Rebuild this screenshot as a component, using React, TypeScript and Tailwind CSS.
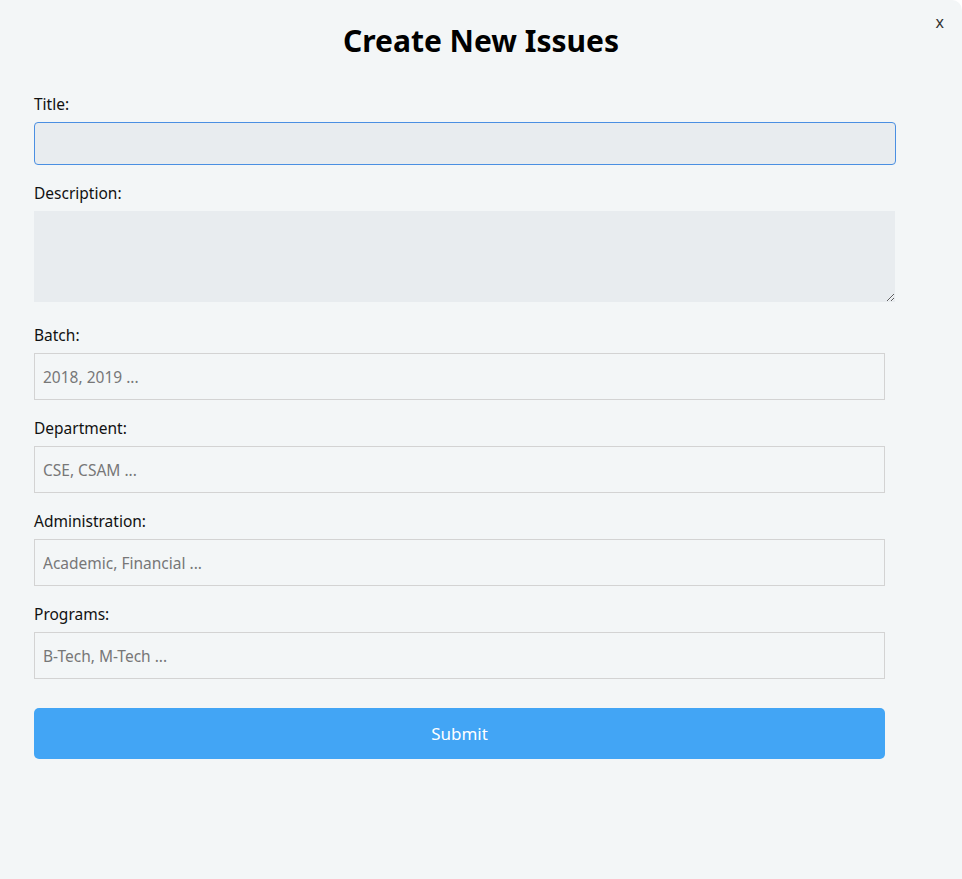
import { useState } from 'react';

const fields = [
  { label: 'Batch:', placeholder: '2018, 2019 ...' },
  { label: 'Department:', placeholder: 'CSE, CSAM ...' },
  { label: 'Administration:', placeholder: 'Academic, Financial ...' },
  { label: 'Programs:', placeholder: 'B-Tech, M-Tech ...' },
];

export default function App() {
  const [title, setTitle] = useState('');
  const [description, setDescription] = useState('');

  return (
    <div className="min-h-screen bg-white font-['Noto_Sans','Open_Sans',sans-serif]">
      <div className="relative min-h-[879px] bg-[#f3f6f7] rounded-tr-[10px] pt-[20px]">
        <button className="absolute right-[18px] top-[10px] text-[16px] text-[#333]">x</button>

        <h1 className="text-center text-[30px] font-bold leading-[42px] text-black">
          Create New Issues
        </h1>

        <form className="mt-[30px] pl-[34px]" onSubmit={(e) => e.preventDefault()}>
          <label className="block text-[15.5px] leading-[24px] text-[#111] mb-[6px]">Title:</label>
          <input
            type="text"
            autoFocus
            value={title}
            onChange={(e) => setTitle(e.target.value)}
            className="block w-[862px] h-[43px] rounded-[4px] border border-[#4a8fe2] bg-[#e8ecef] px-[9px] caret-[#6b7a8a] outline-none mb-[16px]"
          />

          <label className="block text-[15.5px] leading-[24px] text-[#111] mb-[6px]">Description:</label>
          <textarea
            value={description}
            onChange={(e) => setDescription(e.target.value)}
            className="block w-[861px] h-[91px] bg-[#e8ecef] px-[9px] py-[6px] outline-none mb-[21px] resize-y"
          />

          {fields.map((f) => (
            <div key={f.label}>
              <label className="block text-[15.5px] leading-[24px] text-[#111] mb-[6px]">{f.label}</label>
              <input
                type="text"
                placeholder={f.placeholder}
                className="block w-[851px] h-[47px] border border-[#d3d3d3] bg-transparent px-[8px] text-[15.5px] placeholder:text-[#777] outline-none mb-[16px]"
              />
            </div>
          ))}

          <button
            type="submit"
            className="mt-[29px] block w-[851px] h-[51px] rounded-[5px] bg-[#42a5f5] text-white text-[17px]"
          >
            Submit
          </button>
        </form>
      </div>
    </div>
  );
}
